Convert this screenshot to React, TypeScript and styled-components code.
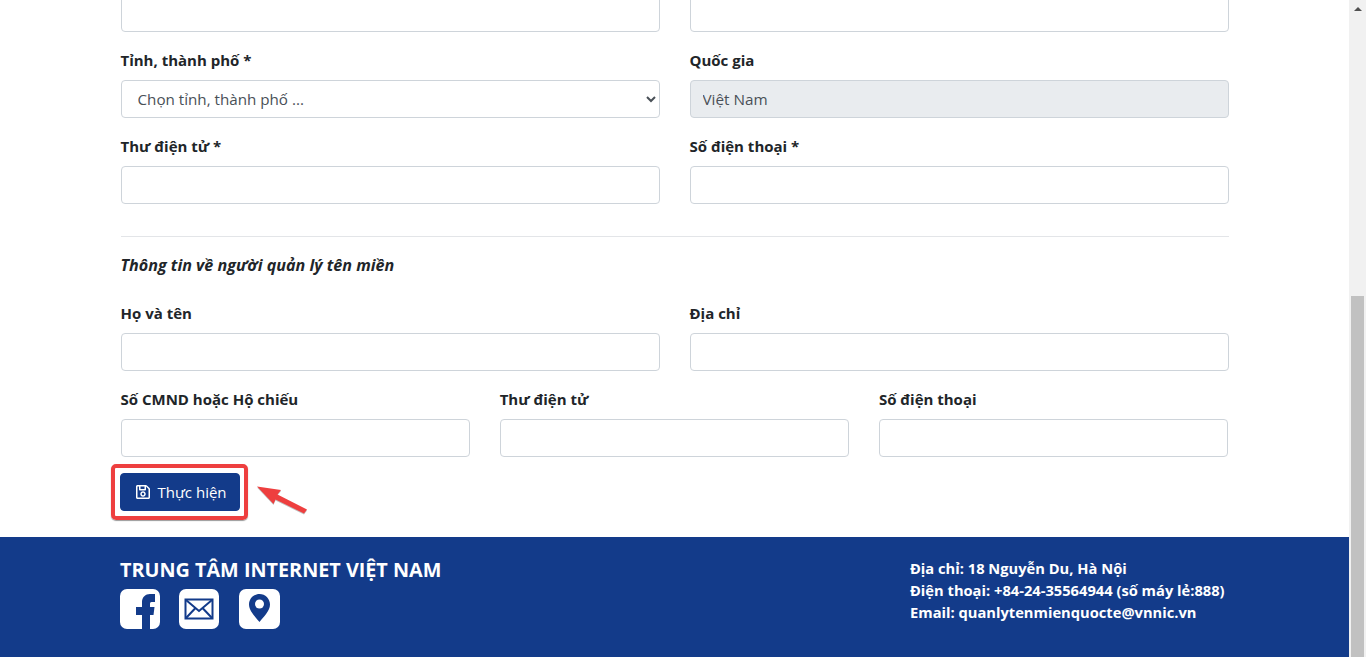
import styled, { createGlobalStyle } from 'styled-components';
import { FaRegSave } from 'react-icons/fa';

const navy = '#133b8a';

function App() {
  return (
    <Page>
      <GlobalStyle />
      <Main>
        <Form>
          <TwoCols>
            <Field>
              <Input />
            </Field>
            <Field>
              <Input />
            </Field>
            <Field>
              <Label>Tỉnh, thành phố *</Label>
              <Select defaultValue="">
                <option value="">Chọn tỉnh, thành phố ...</option>
              </Select>
            </Field>
            <Field>
              <Label>Quốc gia</Label>
              <Input disabled value="Việt Nam" readOnly />
            </Field>
            <Field>
              <Label>Thư điện tử *</Label>
              <Input />
            </Field>
            <Field>
              <Label>Số điện thoại *</Label>
              <Input />
            </Field>
          </TwoCols>
          <Divider />
          <SectionTitle>Thông tin về người quản lý tên miền</SectionTitle>
          <TwoCols>
            <Field>
              <Label>Họ và tên</Label>
              <Input />
            </Field>
            <Field>
              <Label>Địa chỉ</Label>
              <Input />
            </Field>
          </TwoCols>
          <ThreeCols>
            <Field>
              <Label>Số CMND hoặc Hộ chiếu</Label>
              <Input />
            </Field>
            <Field>
              <Label>Thư điện tử</Label>
              <Input />
            </Field>
            <Field>
              <Label>Số điện thoại</Label>
              <Input />
            </Field>
          </ThreeCols>
          <ButtonRow>
            <SubmitButton type="button">
              <FaRegSave size={16} />
              Thực hiện
            </SubmitButton>
            <Highlight />
            <Arrow width="54" height="34" viewBox="0 0 54 34">
              <path d="M1 3.500 L25 7 L21.500 11.500 L51 26.500 L48 30.500 L19.500 16.500 L17.500 21 Z" fill="#ee3f3f" />
            </Arrow>
          </ButtonRow>
        </Form>
        <Footer>
          <FooterLeft>
            <FooterTitle>TRUNG TÂM INTERNET VIỆT NAM</FooterTitle>
            <Socials>
              <svg width="40" height="40" viewBox="0 0 40 40">
                <rect width="40" height="40" rx="7" fill="#fff" />
                <path
                  d="M22 40V26h-6v-8h6v-5c0-5 3.500-8 8-8h5v8h-3.500c-1.100 0-1.500.8-1.500 2v3h4.500l-1 8H30v14z"
                  fill={navy}
                />
              </svg>
              <svg width="40" height="40" viewBox="0 0 40 40">
                <rect width="40" height="40" rx="7" fill="#fff" />
                <rect x="6.500" y="10.500" width="27" height="19" fill="none" stroke={navy} strokeWidth="2" />
                <path d="M7 11 L20 22 L33 11 M7 29 L16.500 19 M33 29 L23.500 19" fill="none" stroke={navy} strokeWidth="2" />
              </svg>
              <svg width="41" height="40" viewBox="0 0 41 40">
                <rect width="41" height="40" rx="7" fill="#fff" />
                <path
                  d="M20.500 33 C16.500 28 10 22 10 15.500 C10 9.700 14.700 5 20.500 5 S31 9.700 31 15.500 C31 22 24.500 28 20.500 33 Z"
                  fill={navy}
                />
                <circle cx="20.500" cy="15" r="4.500" fill="#fff" />
              </svg>
            </Socials>
          </FooterLeft>
          <FooterRight>
            <div>Địa chỉ: 18 Nguyễn Du, Hà Nội</div>
            <div>Điện thoại: +84-24-35564944 (số máy lẻ:888)</div>
            <div>Email: quanlytenmienquocte@vnnic.vn</div>
          </FooterRight>
        </Footer>
      </Main>
      <ScrollTrack>
        <ScrollUp />
        <ScrollThumb />
      </ScrollTrack>
    </Page>
  );
}

const GlobalStyle = createGlobalStyle`
  html, body {
    margin: 0;
    height: 657px;
    overflow: hidden;
    background: #fff;
  }
  body {
    font-family: "Open Sans", "Noto Sans", "Liberation Sans", sans-serif;
    font-size: 15px;
    color: #212529;
  }
  * {
    box-sizing: border-box;
  }
`;

const Page = styled.div`
  display: flex;
  width: 1366px;
  height: 657px;
  overflow: hidden;
`;

const Main = styled.main`
  flex: 1;
  min-width: 0;
  display: flex;
  flex-direction: column;
  height: 657px;
`;

const Form = styled.form`
  flex: none;
  height: 543px;
  margin-top: -6px;
  padding: 0 120px 0 120.5px;
`;

const TwoCols = styled.div`
  display: grid;
  grid-template-columns: 539px 539px;
  column-gap: 30px;
  row-gap: 16px;
`;

const ThreeCols = styled.div`
  display: grid;
  grid-template-columns: repeat(3, 349.2px);
  column-gap: 30px;
  margin-top: 16px;
`;

const Field = styled.div`
  display: flex;
  flex-direction: column;
`;

const Label = styled.label`
  font-size: 15px;
  font-weight: 700;
  line-height: 24px;
  margin: 0 0 8px;
  color: #212529;
`;

const Input = styled.input`
  display: block;
  width: 100%;
  height: 38px;
  padding: 6px 12px;
  font: inherit;
  font-size: 15.300px;
  color: #495057;
  background: #fff;
  border: 1px solid #ced4da;
  border-radius: 4px;
  outline: none;

  &:disabled {
    background: #e9ecef;
    opacity: 1;
  }
`;

const Select = styled.select`
  display: block;
  width: 100%;
  height: 38px;
  padding: 6px 12px;
  font: inherit;
  font-size: 15.200px;
  color: #495057;
  background: #fff;
  border: 1px solid #ced4da;
  border-radius: 4px;
  outline: none;
`;

const Divider = styled.hr`
  border: 0;
  border-top: 1px solid #e3e5e8;
  margin: 32px 0 16px;
`;

const SectionTitle = styled.div`
  font-size: 16.100px;
  font-weight: 700;
  font-style: italic;
  line-height: 24px;
  margin-bottom: 24px;
  color: #212529;
`;

const ButtonRow = styled.div`
  position: relative;
  margin: 16px 0 0 -0.5px;
  width: 120px;
  height: 38px;
`;

const SubmitButton = styled.button`
  display: flex;
  align-items: center;
  justify-content: center;
  gap: 6px;
  width: 120px;
  height: 38px;
  padding: 0 0 0 2px;
  font: inherit;
  font-size: 15px;
  color: #fff;
  background: ${navy};
  border: 1px solid ${navy};
  border-radius: 4px;
`;

const Highlight = styled.div`
  position: absolute;
  left: -9.500px;
  top: -9px;
  width: 137px;
  height: 56px;
  border: 4px solid #ee3f3f;
  border-radius: 5px;
  box-shadow: 0 1px 1px rgba(0, 0, 0, 0.4);
  pointer-events: none;
`;

const Arrow = styled.svg`
  position: absolute;
  left: 136px;
  top: 10px;
  filter: drop-shadow(0 1px 0 rgba(0, 0, 0, 0.25));
`;

const Footer = styled.footer`
  flex: none;
  height: 120px;
  display: flex;
  justify-content: space-between;
  padding: 20px 120px 0 120px;
  background: ${navy};
  color: #fff;
`;

const FooterLeft = styled.div`
  display: flex;
  flex-direction: column;
`;

const FooterTitle = styled.div`
  padding-top: 1px;
  font-size: 19.800px;
  font-weight: 700;
  line-height: 24px;
`;

const Socials = styled.div`
  display: flex;
  gap: 19.4px;
  margin-top: 7px;
`;

const FooterRight = styled.div`
  width: 319px;
  font-size: 14.700px;
  font-weight: 700;
  line-height: 22px;
  white-space: nowrap;
`;

const ScrollTrack = styled.div`
  flex: none;
  position: relative;
  width: 17px;
  height: 657px;
  background: #f1f1f1;
`;

const ScrollUp = styled.div`
  position: absolute;
  left: 5px;
  top: 7px;
  width: 0;
  height: 0;
  border-left: 4px solid transparent;
  border-right: 4px solid transparent;
  border-bottom: 4px solid #505050;
`;

const ScrollThumb = styled.div`
  position: absolute;
  left: 2px;
  right: 2px;
  top: 296px;
  bottom: 0;
  background: #c1c1c1;
`;

export default App;
